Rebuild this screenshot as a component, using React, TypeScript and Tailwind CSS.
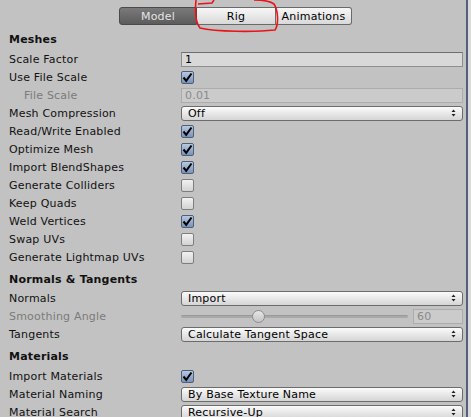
import React from "react";

const font = { fontFamily: '"DejaVu Sans", Verdana, sans-serif' };

function Check({ on }: { on?: boolean }) {
  if (on) {
    return (
      <div className="w-[13px] h-[13px] rounded-[2px] border border-[#4f5f78] bg-gradient-to-b from-[#b7c9e2] to-[#7893ba] flex items-center justify-center">
        <svg width="11" height="11" viewBox="0 0 11 11">
          <path d="M1.5 5.5 L4.2 8.8 L9.5 1.5" fill="none" stroke="#000" strokeWidth="2" />
        </svg>
      </div>
    );
  }
  return <div className="w-[13px] h-[13px] rounded-[2px] border border-[#7e7e7e] bg-gradient-to-b from-[#f2f2f2] to-[#d2d2d2]" />;
}

function Arrows() {
  return (
    <svg width="5" height="8" viewBox="0 0 5 8" className="shrink-0">
      <path d="M2.5 0.5 L4.5 3 L0.5 3 Z M0.5 5 L4.5 5 L2.5 7.5 Z" fill="#222" />
    </svg>
  );
}

function Select({ value }: { value: string }) {
  return (
    <div className="h-[15px] w-full rounded-[3px] border border-[#6c6c6c] bg-gradient-to-b from-[#fbfbfb] to-[#d5d5d5] flex items-center pl-[6px] pr-[6px] text-[11px] leading-none text-black">
      <span className="flex-1">{value}</span>
      <Arrows />
    </div>
  );
}

function Field({ value, disabled }: { value: string; disabled?: boolean }) {
  return (
    <div
      className={
        disabled
          ? "h-[15px] w-full border border-[#acacac] bg-[#cbcbcb] flex items-center pl-[3px] text-[11px] leading-none text-[#8a8a8a]"
          : "h-[15px] w-full border border-[#8e8e8e] border-t-[#6e6e6e] bg-[#d8d8d8] flex items-center pl-[3px] text-[11px] leading-none text-black"
      }
    >
      {value}
    </div>
  );
}

function Row({ label, dim, indent, children }: { label: string; dim?: boolean; indent?: boolean; children?: React.ReactNode }) {
  return (
    <div className="h-[18px] flex items-center">
      <div className={`w-[172px] shrink-0 text-[11px] leading-none ${dim ? "text-[#7b7b7b]" : "text-[#111]"} ${indent ? "pl-[15px]" : ""}`}>
        {label}
      </div>
      <div className="flex-1 flex items-center">{children}</div>
    </div>
  );
}

function Heading({ text, h, pt }: { text: string; h: string; pt: string }) {
  return (
    <div className={`${h} ${pt} text-[11px] leading-[14px] font-bold text-[#111]`}>{text}</div>
  );
}

export default function App() {
  return (
    <div className="w-[471px] h-[417px] overflow-hidden bg-[#c2c2c2] flex relative tracking-[0.2px]" style={font}>
      <div className="flex-1 pl-[9px] pr-[3px]">
        {/* tabs */}
        <div className="flex justify-center pt-[7px]">
          <div className="flex h-[18px] text-[11px] leading-none -ml-[1px]">
            <div className="w-[78px] flex items-center justify-center rounded-l-[3px] border border-[#4a4a4a] bg-gradient-to-b from-[#7a7a7a] to-[#5c5c5c] text-[#e4e4e4]">Model</div>
            <div className="w-[79px] flex items-center justify-center border-y border-r border-[#6a6a6a] bg-gradient-to-b from-[#f7f7f7] to-[#d9d9d9] text-black">Rig</div>
            <div className="w-[76px] flex items-center justify-center rounded-r-[3px] border-y border-r border-[#6a6a6a] bg-gradient-to-b from-[#f7f7f7] to-[#d9d9d9] text-black">Animations</div>
          </div>
        </div>

        <Heading text="Meshes" h="h-[25px]" pt="pt-[8px]" />
        <Row label="Scale Factor"><Field value="1" /></Row>
        <Row label="Use File Scale"><Check on /></Row>
        <Row label="File Scale" dim indent><Field value="0.01" disabled /></Row>
        <Row label="Mesh Compression"><Select value="Off" /></Row>
        <Row label="Read/Write Enabled"><Check on /></Row>
        <Row label="Optimize Mesh"><Check on /></Row>
        <Row label="Import BlendShapes"><Check on /></Row>
        <Row label="Generate Colliders"><Check /></Row>
        <Row label="Keep Quads"><Check /></Row>
        <Row label="Weld Vertices"><Check on /></Row>
        <Row label="Swap UVs"><Check /></Row>
        <Row label="Generate Lightmap UVs"><Check /></Row>

        <Heading text="Normals & Tangents" h="h-[23px]" pt="pt-[7px]" />
        <Row label="Normals"><Select value="Import" /></Row>
        <Row label="Smoothing Angle" dim>
          <div className="flex-1 relative h-[13px] flex items-center">
            <div className="w-full h-[3px] rounded-full bg-[#a9a9a9] border-t border-[#999]" />
            <div className="absolute left-[71px] top-0 w-[13px] h-[13px] rounded-full border border-[#8c8c8c] bg-gradient-to-b from-[#e6e6e6] to-[#c4c4c4]" />
          </div>
          <div className="w-[50px] ml-[5px]"><Field value="60" disabled /></div>
        </Row>
        <Row label="Tangents"><Select value="Calculate Tangent Space" /></Row>

        <Heading text="Materials" h="h-[24px]" pt="pt-[7px]" />
        <Row label="Import Materials"><Check on /></Row>
        <Row label="Material Naming"><Select value="By Base Texture Name" /></Row>
        <Row label="Material Search"><Select value="Recursive-Up" /></Row>
      </div>
      <div className="w-[2px] bg-[#52607a]" />
      <div className="w-[3px] bg-[#dadada]" />

      {/* red hand-drawn annotation */}
      <svg className="absolute left-0 top-0 pointer-events-none" width="471" height="40">
        <path
          d="M196 0 C195 10 195 22 200 28 C216 32 256 32 275 30 C279 24 278 10 274 4 C270 1 263 0 254 0"
          fill="none"
          stroke="#e8141a"
          strokeWidth="1.6"
        />
        <path d="M198 4 L212 3 L214 0" fill="none" stroke="#e8141a" strokeWidth="1.6" />
      </svg>
    </div>
  );
}
